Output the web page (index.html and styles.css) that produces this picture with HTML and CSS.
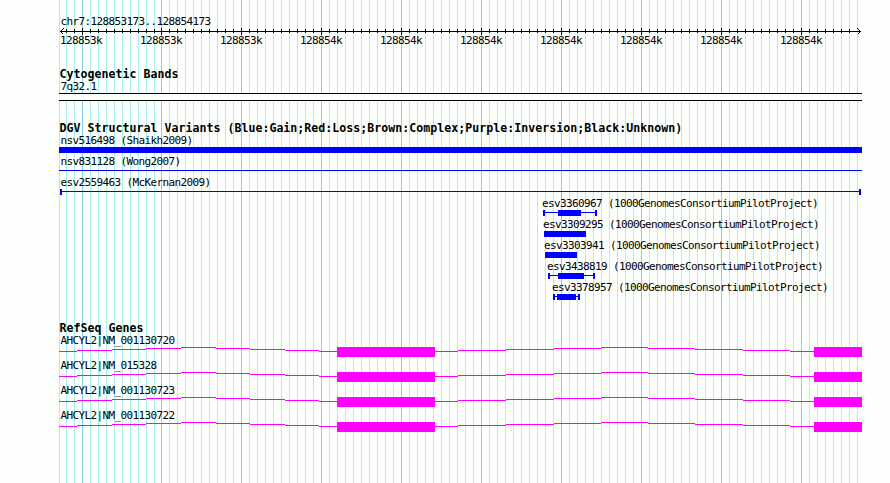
FILE: index.html
```
<!DOCTYPE html>
<html lang="en">

<head>
    <meta charset="UTF-8">
    <title>chr7:128853173..128854173</title>
    <link rel="stylesheet" href="styles.css">
</head>

<body>
    <div class="grid">
        <div class="grid-start"></div>
        <div class="grid-rest"></div>
    </div>

    <div class="panel">
        <!-- Ruler -->
        <div class="ruler">
            <div class="label">chr7:128853173..128854173</div>
            <svg class="axis" viewBox="59 0 803 6" width="803" height="6">
                <path d="M60 3.5H861" />
                <path d="M66 3H155M161 3H856" stroke-width="4" stroke-dasharray="1 7" />
                <path d="M82 3.5H83M161 3.5H802" stroke-width="7" stroke-dasharray="1 79" />
                <path d="M63.5 0.5L60.5 3.5L63.5 6.5M857.5 0.5L860.5 3.5L857.5 6.5" />
            </svg>
            <div class="ticks">
                <span>128853k</span>
                <span>128853k</span>
                <span>128853k</span>
                <span>128854k</span>
                <span>128854k</span>
                <span>128854k</span>
                <span>128854k</span>
                <span>128854k</span>
                <span>128854k</span>
                <span>128854k</span>
            </div>
        </div>

        <div class="track cyto">
            <h2 class="title">Cytogenetic Bands</h2>
            <div class="label">7q32.1</div>
            <div class="band"></div>
        </div>

        <div class="track variants">
            <h2 class="title">DGV Structural Variants (Blue:Gain;Red:Loss;Brown:Complex;Purple:Inversion;Black:Unknown)</h2>
            <div class="feature">
                <div class="label">nsv516498 (Shaikh2009)</div>
                <svg viewBox="59 0 803 8" width="803" height="8"><path d="M59 0h803v6h-803z" /></svg>
            </div>
            <div class="feature">
                <div class="label">nsv831128 (Wong2007)</div>
                <svg viewBox="59 0 803 8" width="803" height="8"><path d="M59 2h803v1h-803z" /></svg>
            </div>
            <div class="feature">
                <div class="label">esv2559463 (McKernan2009)</div>
                <svg viewBox="59 0 803 8" width="803" height="8"><path d="M60 0h2v6h-2zM62 2h797v1h-797zM859 0h2v6h-2z" /></svg>
            </div>
            <div class="feature at-543">
                <div class="label">esv3360967 (1000GenomesConsortiumPilotProject)</div>
                <svg viewBox="543 0 54 8" width="54" height="8"><path d="M543 0h2v6h-2zM545 2h50v1h-50zM558 0h23v6h-23zM595 0h2v6h-2z" /></svg>
            </div>
            <div class="feature at-544">
                <div class="label">esv3309295 (1000GenomesConsortiumPilotProject)</div>
                <svg viewBox="544 0 42 8" width="42" height="8"><path d="M544 0h42v6h-42z" /></svg>
            </div>
            <div class="feature at-545">
                <div class="label">esv3303941 (1000GenomesConsortiumPilotProject)</div>
                <svg viewBox="545 0 32 8" width="32" height="8"><path d="M545 0h32v6h-32z" /></svg>
            </div>
            <div class="feature at-548">
                <div class="label">esv3438819 (1000GenomesConsortiumPilotProject)</div>
                <svg viewBox="548 0 47 8" width="47" height="8"><path d="M548 0h2v6h-2zM550 2h43v1h-43zM558 0h26v6h-26zM593 0h2v6h-2z" /></svg>
            </div>
            <div class="feature at-553">
                <div class="label">esv3378957 (1000GenomesConsortiumPilotProject)</div>
                <svg viewBox="553 0 27 8" width="27" height="8"><path d="M553 0h2v6h-2zM555 2h23v1h-23zM557 0h19v6h-19zM578 0h2v6h-2z" /></svg>
            </div>
        </div>

        <!-- All four transcripts share the same exons in this window -->
        <svg class="defs" width="0" height="0">
            <symbol id="exons" viewBox="59 0 803 12">
                <path d="M59 4h18v1h-18zM77 3h35v1h-35zM112 2h34v1h-34zM146 1h35v1h-35zM181 0h35v1h-35zM216 1h34v1h-34zM250 2h35v1h-35zM285 3h34v1h-34zM319 4h18v1h-18z" />
                <path d="M435 4h23v1h-23zM458 3h48v1h-48zM506 2h48v1h-48zM554 1h47v1h-47zM601 0h47v1h-47zM648 1h47v1h-47zM695 2h48v1h-48zM743 3h47v1h-47zM790 4h24v1h-24z" />
                <path d="M337 0h98v10h-98zM814 0h48v10h-48z" />
            </symbol>
        </svg>

        <div class="track genes">
            <h2 class="title">RefSeq Genes</h2>
            <div class="feature">
                <div class="label">AHCYL2|NM_001130720</div>
                <svg width="803" height="12"><use href="#exons" /></svg>
            </div>
            <div class="feature">
                <div class="label">AHCYL2|NM_015328</div>
                <svg width="803" height="12"><use href="#exons" /></svg>
            </div>
            <div class="feature">
                <div class="label">AHCYL2|NM_001130723</div>
                <svg width="803" height="12"><use href="#exons" /></svg>
            </div>
            <div class="feature">
                <div class="label">AHCYL2|NM_001130722</div>
                <svg width="803" height="12"><use href="#exons" /></svg>
            </div>
        </div>
    </div>
</body>

</html>
```

FILE: styles.css
```
*,
*::before,
*::after {
    box-sizing: border-box;
}

body {
    margin: 0;
    height: 483px;
    overflow: hidden;
    position: relative;
    background-color: #fdfffc;
    color: #000000;
    font-family: "DejaVu Sans Mono", "Liberation Mono", monospace;
}

svg {
    display: block;
    overflow: visible;
    shape-rendering: crispEdges;
}

/* vertical guide lines behind the tracks */
.grid {
    position: absolute;
    top: 0;
    left: 59px;
    width: 803px;
    height: 100%;
    display: flex;
}

.grid-start,
.grid-rest {
    background-image: linear-gradient(90deg, #87ceeb 1px, transparent 1px), linear-gradient(90deg, #afeeee 1px, transparent 1px);
    background-size: 80px 100%, 8px 100%;
}

.grid-start {
    width: 102px;
    border-left: 1px solid #afeeee;
    background-position: 22px 0, 6px 0;
    background-repeat: no-repeat, repeat-x;
}

.grid-rest {
    flex: 1;
}

.panel {
    position: relative;
    width: 803px;
    margin-left: 59px;
    padding-top: 15px;
}

.label,
.ticks {
    height: 13px;
    line-height: 13px;
    font-size: 11px;
    letter-spacing: -0.62px;
    white-space: nowrap;
}

.label {
    padding-left: 1.5px;
}

.title {
    height: 12px;
    margin: 0;
    padding-left: 0.5px;
    line-height: 12px;
    font-size: 11.6px;
    font-weight: bold;
    letter-spacing: 0.016px;
    white-space: nowrap;
}

.axis {
    fill: none;
    stroke: #000000;
}

.ticks {
    display: flex;
    padding-left: 1px;
}

.ticks span {
    flex: 0 0 80px;
}

.cyto {
    margin-top: 21px;
}

.band {
    height: 8px;
    border-top: 1px solid #000000;
    border-bottom: 1px solid #000000;
    background-color: #fdfffc;
}

.variants {
    margin-top: 21px;
    fill: #0000ff;
}

.genes {
    margin-top: 20px;
    fill: #ff00ff;
}

/* start position of the short variants */
.at-543 {
    margin-left: 484px;
}

.at-544 {
    margin-left: 485px;
}

.at-545 {
    margin-left: 486px;
}

.at-548 {
    margin-left: 489px;
}

.at-553 {
    margin-left: 494px;
}

.variants [class*="at-"] .label {
    margin-left: -1px;
    padding-left: 0;
}
```
